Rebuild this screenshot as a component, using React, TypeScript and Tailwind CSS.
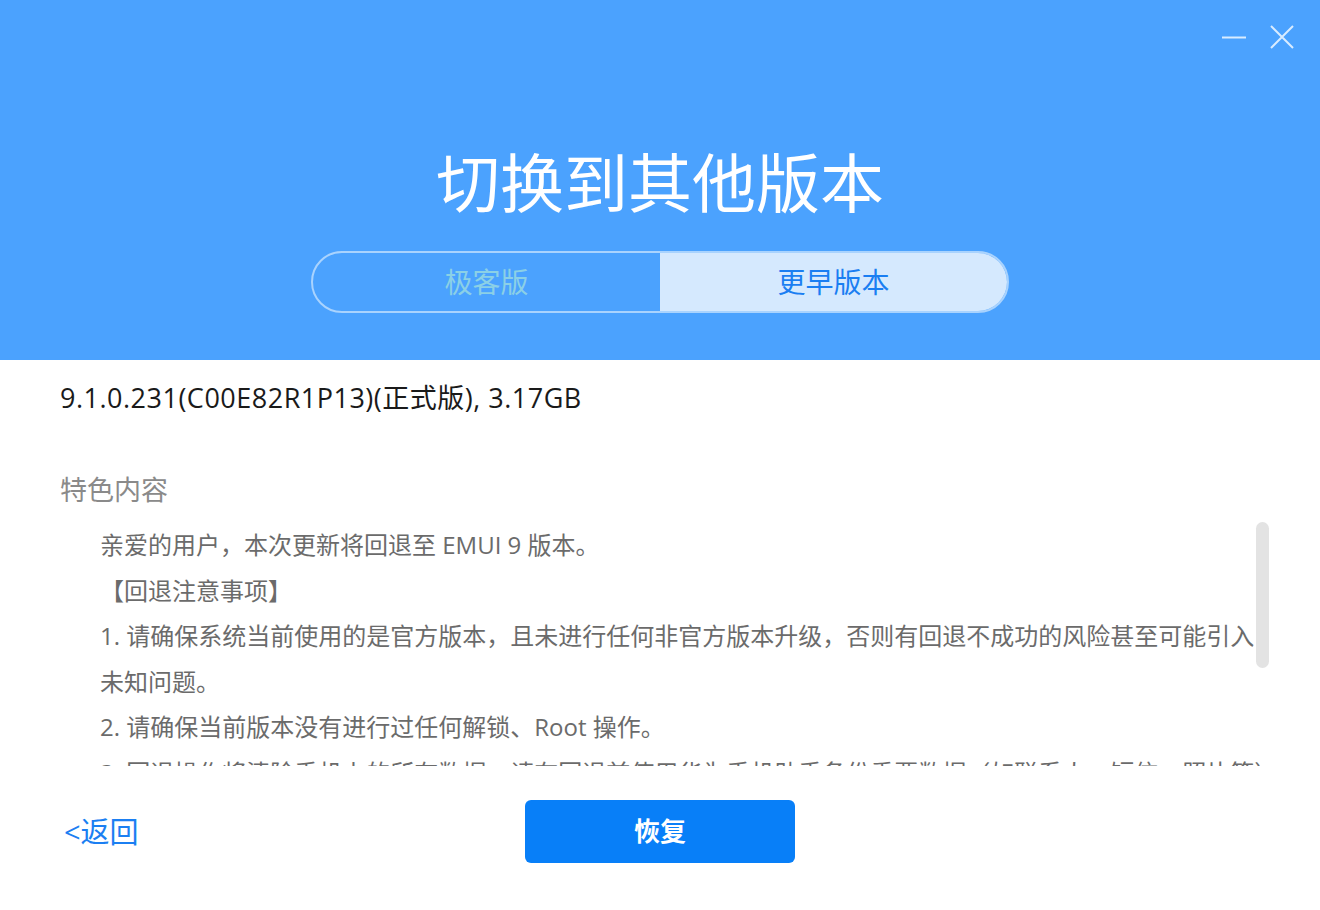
const font = { fontFamily: '"Open Sans", "Noto Sans CJK SC", sans-serif' };

const notes = [
  "亲爱的用户，本次更新将回退至 EMUI 9 版本。",
  "【回退注意事项】",
  "1. 请确保系统当前使用的是官方版本，且未进行任何非官方版本升级，否则有回退不成功的风险甚至可能引入",
  "未知问题。",
  "2. 请确保当前版本没有进行过任何解锁、Root 操作。",
  "3. 回退操作将清除手机上的所有数据，请在回退前使用华为手机助手备份重要数据（如联系人、短信、照片等）。",
];

const WindowControls = () => (
  <div className="absolute right-[26px] top-[25px] flex items-center gap-[24px]">
    <svg width="24" height="24" viewBox="0 0 24 24">
      <path d="M0 12.5 H24" stroke="#d9ecff" strokeWidth="2" />
    </svg>
    <svg width="24" height="24" viewBox="0 0 24 24">
      <path d="M1 1 L23 23 M23 1 L1 23" stroke="#d9ecff" strokeWidth="2" />
    </svg>
  </div>
);

export default function App() {
  return (
    <div className="flex h-[910px] w-[1320px] flex-col overflow-hidden bg-white" style={font}>
      {/* Header */}
      <div className="relative flex h-[360px] shrink-0 flex-col items-center bg-[#4ba2fe]">
        <WindowControls />
        <h1 className="mt-[151px] text-[64px] font-normal leading-[64px] text-white">切换到其他版本</h1>
        <div className="mt-[36px] flex h-[62px] w-[698px] overflow-hidden rounded-full border-2 border-[#a9d3fe]">
          <button className="flex flex-1 items-center justify-center text-[28px] text-[#8bd0e6]">极客版</button>
          <button className="flex flex-1 items-center justify-center bg-[#d5e9fe] text-[28px] text-[#1a7ef2]">
            更早版本
          </button>
        </div>
      </div>

      {/* Body */}
      <div className="flex flex-col px-[60px]">
        <div className="mt-[20px] text-[27px] leading-[36px] tracking-[0.5px] text-[#1a1a1a]">
          9.1.0.231(C00E82R1P13)(正式版), 3.17GB
        </div>
        <div className="mt-[56px] text-[27px] leading-[36px] text-[#8a8a8a]">特色内容</div>
        <div className="relative mt-[14px]">
          <div className="h-[244px] overflow-hidden pl-[40px]">
            {notes.map((line) => (
              <div key={line} className="whitespace-nowrap text-[24px] leading-[45.5px] text-[#6b6b6b]">
                {line}
              </div>
            ))}
          </div>
          <div className="absolute right-[-9px] top-0 h-[146px] w-[13px] rounded-full bg-[#e3e3e3]" />
        </div>
      </div>

      {/* Footer */}
      <div className="mt-[34px] grid grid-cols-3 items-center">
        <a className="pl-[64px] text-[29px] leading-[40px] text-[#1b7ff2]">&lt;返回</a>
        <div className="flex justify-center">
          <button className="h-[63px] w-[270px] rounded-[6px] bg-[#087ff8] text-[26px] font-bold text-white">
            恢复
          </button>
        </div>
        <div />
      </div>
    </div>
  );
}
